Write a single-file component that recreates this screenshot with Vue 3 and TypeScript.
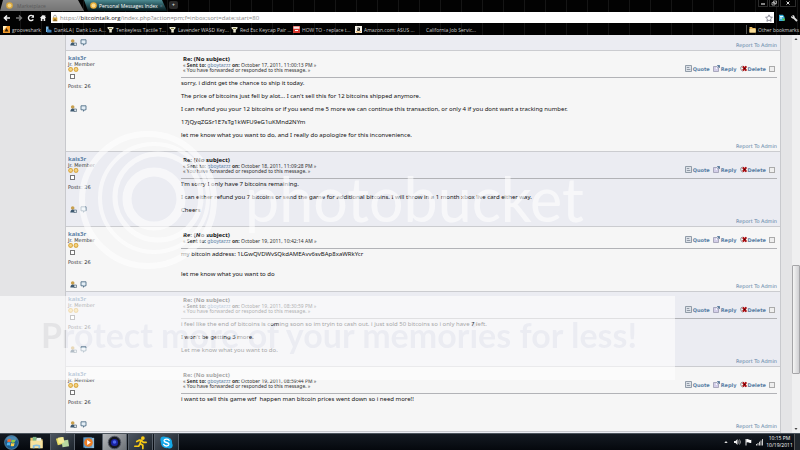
<script setup lang="ts">
interface Post {
  sent: string
  forwarded: boolean
  paragraphs: string[]
  spacious?: boolean
}

interface Bookmark {
  label: string
  icon: 'shark' | 'deal' | 'key' | 'howto' | 'amazon' | 'none'
}

const posts: Post[] = [
  {
    sent: 'October 17, 2011, 11:00:13 PM',
    forwarded: true,
    paragraphs: [
      'sorry, i didnt get the chance to ship it today.',
      "The price of bitcoins just fell by alot... I can't sell this for 12 bitcoins shipped anymore.",
      'I can refund you your 12 bitcoins or if you send me 5 more we can continue this transaction, or only 4 if you dont want a tracking number.',
      '17jQyqZGSr1E7sTg1kWFU9eG1uKMnd2NYm',
      'let me know what you want to do, and I really do apologize for this inconvenience.',
    ],
  },
  {
    sent: 'October 18, 2011, 11:09:28 PM',
    forwarded: true,
    paragraphs: [
      "I'm sorry I only have 7 bitcoins remaining.",
      'I can either refund you 7 bitcoins or send the game for additional bitcoins. I will throw in a 1 month xbox live card either way.',
      'Cheers',
    ],
  },
  {
    sent: 'October 19, 2011, 10:42:14 AM',
    forwarded: false,
    spacious: true,
    paragraphs: ['my bitcoin address: 1LGwQVDWvSQkdAMEAvv6svBAp8xaWRkYcr', 'let me know what you want to do'],
  },
  {
    sent: 'October 19, 2011, 08:30:59 PM',
    forwarded: true,
    paragraphs: [
      'i feel like the end of bitcoins is coming soon so im tryin to cash out. i just sold 50 bitcoins so i only have 7 left.',
      "I won't be getting 5 more.",
      'Let me know what you want to do.',
    ],
  },
  {
    sent: 'October 19, 2011, 08:59:44 PM',
    forwarded: true,
    paragraphs: ['i want to sell this game wtf\u00a0 happen man bitcoin prices went down so i need more!!'],
  },
]

const bookmarks: Bookmark[] = [
  { label: 'grooveshark', icon: 'shark' },
  { label: 'DankLA| Dank Los A...', icon: 'deal' },
  { label: 'Tenkeyless Tactile T...', icon: 'key' },
  { label: 'Lavender WASD Key...', icon: 'key' },
  { label: 'Red Esc Keycap Pair ...', icon: 'key' },
  { label: 'HOW TO - replace t...', icon: 'howto' },
  { label: 'Amazon.com: ASUS ...', icon: 'amazon' },
  { label: 'California Job Servic...', icon: 'none' },
]
</script>

<template>
  <div class="desktop">
    <header class="browser">
      <div class="tabs">
        <button class="tab idle" type="button">
          <svg class="coin" viewBox="0 0 7 7"><circle cx="3.500" cy="3.500" r="3.300" fill="#d9a83c" /><circle cx="3.500" cy="3.500" r="2" fill="#f1d388" /></svg>
          <span>Marketplace</span>
        </button>
        <button class="tab active" type="button">
          <svg class="coin" viewBox="0 0 7 7"><circle cx="3.500" cy="3.500" r="3.300" fill="#e8ad36" /><circle cx="3.500" cy="3.500" r="2" fill="#f8dc93" /></svg>
          <span>Personal Messages Index</span>
          <i>×</i>
        </button>
        <button class="new-tab" type="button" aria-label="New tab">+</button>
        <div class="window-buttons">
          <button type="button" aria-label="Minimize"><svg viewBox="0 0 8 6"><path d="M2 4h4" stroke="#ddd" stroke-width="1.200" /></svg></button>
          <button type="button" aria-label="Restore"><svg viewBox="0 0 8 6"><path d="M3.500 1h3v2.500h-3zM2 2.500h3V5H2z" fill="#111" stroke="#bbb" stroke-width=".8" /></svg></button>
          <button class="wide" type="button" aria-label="Close"><svg viewBox="0 0 8 6"><path d="M2.500 1.500l3 3m0-3l-3 3" stroke="#ddd" /></svg></button>
        </div>
      </div>

      <div class="toolbar">
        <button type="button" aria-label="Back"><svg viewBox="0 0 8 8"><path d="M7 4H2M4 1.500L1.500 4 4 6.500" fill="none" stroke="#f2f2f2" stroke-width="1.600" /></svg></button>
        <button type="button" aria-label="Forward"><svg viewBox="0 0 8 8"><path d="M1 4h5M4 1.500L6.500 4 4 6.500" fill="none" stroke="#777" stroke-width="1.400" /></svg></button>
        <button type="button" aria-label="Reload"><svg viewBox="0 0 8 8"><path d="M6.300 5.300A2.600 2.600 0 1 1 6 2.300" fill="none" stroke="#eee" stroke-width="1.400" /><path d="M7 .8v3H4z" fill="#eee" /></svg></button>
        <button type="button" aria-label="Home"><svg viewBox="0 0 8 8"><path d="M4 .8L.8 4h1v3h1.600V5h1.200v2h1.600V4h1L6.300 3V1.200h-1v.9z" fill="#eee" /></svg></button>
        <div class="address">
          <svg class="lock" viewBox="0 0 6 8"><path d="M1.700 4V2.500a1.300 1.300 0 0 1 2.600 0V4" fill="none" stroke="#999" stroke-width=".9" /><path d="M.7 3.500h4.600v3.500H.7z" fill="#dba63a" /><path d="M3 4.500l2.500 2.700H.7z" fill="#8c6b2a" /></svg>
          <a href="#">https://<b>bitcointalk.org</b>/index.php?action=pm;f=inbox;sort=date;start=80</a>
          <svg class="star" viewBox="0 0 8 8"><path d="M4 .8l1 2.200 2.400.3-1.800 1.600.5 2.400L4 6.100 1.900 7.300l.5-2.400L.6 3.300 3 3z" fill="#fff" stroke="#667" stroke-width=".7" /></svg>
        </div>
        <button type="button" aria-label="Downloads"><svg viewBox="0 0 8 8"><path d="M1 .8h4L6.500 3v4H1z" fill="#3bb1dc" /><path d="M2 2.500h3M2 4h2" stroke="#e6faff" /><path d="M4.500 4.500H7v2H4.500z" fill="#5fbf4b" /></svg></button>
        <button type="button" aria-label="Settings"><svg viewBox="0 0 8 8"><path d="M3 3l4 4" stroke="#ddd" stroke-width="1.800" /><path d="M1 1.800l1.200 1.100.8-.8L2 1a2 2 0 0 1 2.500 2.600A2 2 0 0 1 1 1.800z" fill="#ddd" /></svg></button>
      </div>

      <nav class="bookmarks">
        <a v-for="mark in bookmarks" :key="mark.label" href="#" :class="mark.icon">
          <svg viewBox="0 0 7 7">
            <template v-if="mark.icon === 'shark'"><path d="M0 0h7v7H0z" fill="#f29a2a" /><path d="M0 0h4L1 4H0z" fill="#fff0c0" /><path d="M1.500 5.500l2-3.500 2 3.500z" fill="#33200a" /></template>
            <template v-else-if="mark.icon === 'deal'"><path d="M1 .5h2.500V6H1z" fill="#7cb6df" /><path d="M2 3l4.500 1v2.500H2z" fill="#3f7fb5" /></template>
            <template v-else-if="mark.icon === 'key'"><path d="M.5 1h6v1.300L4.800 4v2.500H2.300V4L.5 2.300z" fill="#e9e6cf" /><path d="M2 2.500h3" stroke="#7d7a45" /></template>
            <template v-else-if="mark.icon === 'howto'"><path d="M0 0h7v7H0z" fill="#d93a30" /><path d="M.5.5h6v2.300h-6z" fill="#f4e9e6" /><path d="M2 4.500h3" stroke="#fff" /></template>
            <template v-else-if="mark.icon === 'amazon'"><path d="M0 0h7v7H0z" fill="#f5f2e8" /><path d="M2.300 2h2.200v2.500H2.500V3.300h2" fill="none" stroke="#111" stroke-width=".9" /><path d="M1 5.500q2.500 1.500 5 0" fill="none" stroke="#e99a27" stroke-width=".8" /></template>
          </svg>
          <span>{{ mark.label }}</span>
        </a>
        <a class="other" href="#">
          <svg viewBox="0 0 7 7"><path d="M.5 1h2.500l.7 1h3v4.500H.5z" fill="#e9bd63" /><path d="M.5 3h6.200v3.500H.5z" fill="#f8dc97" /></svg>
          <span>Other bookmarks</span>
        </a>
      </nav>
    </header>

    <main class="page">
      <div class="board">
        <article class="post tail shaded">
          <div class="contact">
            <svg viewBox="0 0 7 7"><circle cx="2.700" cy="2" r="1.800" fill="#c89f4d" /><path d="M.3 6.500q.2-3 2.600-3 2 0 2.200 3z" fill="#3c5870" /><path d="M4 4h2.500v2.500H4z" fill="#dde6ee" stroke="#445a6c" stroke-width=".6" /></svg>
            <svg viewBox="0 0 7 7"><path d="M1 .8h5v4H4.500L3.500 6.300V4.800H1z" fill="#e4eef6" stroke="#516f88" stroke-width=".9" /></svg>
          </div>
          <a class="report" href="#">Report To Admin</a>
        </article>

        <article v-for="(post, index) in posts" :key="post.sent" class="post" :class="{ shaded: index % 2 === 1 }">
          <aside class="poster">
            <a class="name" href="#">kais3r</a>
            <span class="rank">Jr. Member</span>
            <svg class="coins" viewBox="0 0 11 5"><circle cx="2.600" cy="2.500" r="2.400" fill="#d9a63e" /><circle cx="2.600" cy="2.400" r="1.400" fill="#f5d584" /><circle cx="8" cy="2.500" r="2.400" fill="#d9a63e" /><circle cx="8" cy="2.400" r="1.400" fill="#f5d584" /></svg>
            <span class="offline"></span>
            <span class="count">Posts: 26</span>
            <div class="contact">
              <svg viewBox="0 0 7 7"><circle cx="2.700" cy="2" r="1.800" fill="#c89f4d" /><path d="M.3 6.500q.2-3 2.600-3 2 0 2.200 3z" fill="#3c5870" /><path d="M4 4h2.500v2.500H4z" fill="#dde6ee" stroke="#445a6c" stroke-width=".6" /></svg>
              <svg viewBox="0 0 7 7"><path d="M1 .8h5v4H4.500L3.500 6.300V4.800H1z" fill="#e4eef6" stroke="#516f88" stroke-width=".9" /></svg>
            </div>
          </aside>

          <section class="message">
            <div class="head">
              <div class="titles">
                <h2>Re: (No subject)</h2>
                <p>« <b>Sent to:</b> <a href="#">gboytazzz</a> <b>on:</b> {{ post.sent }} »</p>
                <p v-if="post.forwarded">« You have forwarded or responded to this message. »</p>
              </div>
              <div class="actions">
                <a href="#"><svg viewBox="0 0 7 7"><path d="M.5.5h6v6h-6z" fill="#dde2e9" stroke="#8894a0" stroke-width=".9" /><path d="M1.800 2.500h2.500M1.800 4.500h3.500" stroke="#7d8894" stroke-width=".8" /></svg>Quote</a>
                <a href="#"><svg viewBox="0 0 7 7"><path d="M.5 1.500h5v5h-5z" fill="#d3cee8" stroke="#9a9ab0" stroke-width=".8" /><path d="M3 4l1.500-2.500" stroke="#fff" /><path d="M4.200.5h2.300v2.400M6.300.7L4.500 2.500" fill="none" stroke="#53779a" stroke-width=".9" /></svg>Reply</a>
                <a href="#"><svg viewBox="0 0 7 7"><path d="M2.500 1Q.5 1.500.7 3.500t2 2.800" fill="none" stroke="#777" stroke-width=".8" /><path d="M2.800 1.300l3.500 4.400m0-4.400l-3.500 4.400" stroke="#a80e12" stroke-width="1.900" /><path d="M3.800 3.500h1.500" stroke="#400" /></svg>Delete</a>
                <input type="checkbox" :aria-label="'Select message ' + (index + 1)" />
              </div>
            </div>
            <div class="body" :class="{ spacious: post.spacious }">
              <p v-for="text in post.paragraphs" :key="text">{{ text }}</p>
            </div>
            <a class="report" href="#">Report To Admin</a>
          </section>
        </article>
        <div class="post shaded"></div>
      </div>
      <div class="scrollbar">
        <svg viewBox="0 0 8 8"><path d="M2.500 5L4 3l1.500 2z" fill="#444" /></svg>
        <div class="track"><div class="thumb"></div></div>
        <svg viewBox="0 0 8 8"><path d="M2.500 3L4 5l1.500-2z" fill="#444" /></svg>
      </div>
    </main>

    <footer class="taskbar">
      <button class="start" type="button" aria-label="Start">
        <svg viewBox="0 0 16 16"><circle cx="8" cy="8" r="7.400" fill="#1d5c8d" stroke="#7caac6" stroke-width=".6" /><ellipse cx="8" cy="4.500" rx="5.500" ry="3.300" fill="#6ea6ca" opacity=".6" /><path d="M4 4.700q2-1 3.600 0L7 7.600q-1.500-1-3.500 0z" fill="#f0642f" /><path d="M8.300 5q1.700.9 3.700-.2l-.6 3q-2 1-3.600 0z" fill="#8fcc3d" /><path d="M3.400 8.300q2-1 3.500 0l-.6 3q-1.600-1-3.500 0z" fill="#4fb4ef" /><path d="M7.700 8.600q1.600 1 3.600 0l-.7 3q-1.900 1-3.500 0z" fill="#fbd04a" /></svg>
      </button>
      <button type="button" aria-label="Explorer">
        <svg viewBox="0 0 16 16"><path d="M1.500 3h4l1 1.500h8V14h-13z" fill="#e5c36d" /><path d="M4 2h4v5H4z" fill="#7fb787" /><path d="M8 3h5v4H8z" fill="#eaf2e9" /><path d="M1.500 6h13v8h-13z" fill="#f6e2a0" /><path d="M4 14v-3q4-2 8 0v3h-2v-2H6v2z" fill="#87bfe2" /></svg>
      </button>
      <button class="open" type="button" aria-label="Sticky Notes">
        <svg viewBox="0 0 16 16"><path d="M1 4l7-2 2 7-7 2z" fill="#e8dc62" /><path d="M7 6l7-1 1 7-7 1z" fill="#b8d9a0" /><path d="M3 3l6-1 1 6-6 1z" fill="#f3ec9a" /></svg>
      </button>
      <button type="button" aria-label="Media Player">
        <svg viewBox="0 0 16 16"><path d="M4 3h10v11H4z" fill="#8bb8d8" /><path d="M2.500 2.500h9v11h-9z" fill="#5f98c4" /><circle cx="8" cy="8" r="4.600" fill="#ed7d24" /><path d="M6.500 5.300v5.400l4-2.700z" fill="#fff" /></svg>
      </button>
      <button class="open lit" type="button" aria-label="Camera">
        <svg viewBox="0 0 16 16"><circle cx="8" cy="8" r="6.700" fill="#14161e" stroke="#555b68" /><circle cx="8" cy="8" r="3.800" fill="#1b24a0" /><circle cx="8" cy="7.500" r="1.900" fill="#4d67ef" /></svg>
      </button>
      <button class="open" type="button" aria-label="Messenger">
        <svg viewBox="0 0 16 16"><circle cx="10.500" cy="3.300" r="2" fill="#f9cb15" /><path d="M8.700 5.500L7.500 9l3 2v3.500M7.500 9.500L6 12H2M4 7l2.500-1.500 2.500.3 2 2h3" fill="none" stroke="#f9cb15" stroke-width="1.800" stroke-linecap="round" stroke-linejoin="round" /></svg>
      </button>
      <button class="open" type="button" aria-label="Skype">
        <svg viewBox="0 0 16 16"><circle cx="8" cy="8" r="6" fill="#15a8e8" /><circle cx="5" cy="5" r="3.500" fill="#15a8e8" /><circle cx="11" cy="11" r="3.500" fill="#15a8e8" /><path d="M10.800 5.700Q9.700 4.300 7.800 4.400 5.300 4.700 5.500 6.300 5.700 7.600 8 8q2.600.5 2.500 2-.2 1.600-2.500 1.700-2 0-3-1.700" fill="none" stroke="#fff" stroke-width="1.500" stroke-linecap="round" /></svg>
      </button>
      <div class="tray">
        <svg viewBox="0 0 8 8"><path d="M2.300 5L4 3l1.700 2z" fill="#ddd" /></svg>
        <svg viewBox="0 0 8 8"><path d="M1 3h1.500l2-2v6l-2-2H1z" fill="#eee" /><path d="M5.500 2.500q1 1.500 0 3M6.500 1.500q2 2.500 0 5" fill="none" stroke="#ccc" stroke-width=".7" /></svg>
        <svg viewBox="0 0 8 8"><path d="M2 1v6.500" stroke="#fff" stroke-width=".9" /><path d="M2.300 1.300q1.500-.6 2.500.2t2.500.3v3q-1.500.5-2.500-.2t-2.500 0z" fill="#fff" /></svg>
        <svg viewBox="0 0 8 8"><path d="M1 6h1v1.500H1zM2.500 5h1v2.500h-1zM4 3.800h1v3.700H4zM5.500 2.500h1v5h-1zM7 1h1v6.500H7z" fill="#ccc" /></svg>
        <time><span>10:15 PM</span><span>10/19/2011</span></time>
      </div>
      <button class="show-desktop" type="button" aria-label="Show desktop"></button>
    </footer>

    <svg class="watermark" viewBox="0 0 800 450" preserveAspectRatio="none">
      <defs>
        <mask id="slogan">
          <rect y="296" width="675" height="84" fill="#fff" />
          <text x="41" y="348" class="slogan">Protect more of your memories for less!</text>
        </mask>
      </defs>
      <g fill="none" stroke="#fff" opacity=".6">
        <circle cx="148" cy="200" r="66" stroke-width="6" />
        <circle cx="154" cy="198" r="54" stroke-width="4" />
        <circle cx="158" cy="197" r="43" stroke-width="5" />
        <circle cx="154" cy="199" r="27" stroke-width="9" />
      </g>
      <text x="245" y="222" class="brand">photobucket</text>
      <rect y="296" width="675" height="84" fill="#fff" opacity=".6" mask="url(#slogan)" />
    </svg>
  </div>
</template>

<style>
html,
body {
  margin: 0;
  overflow: hidden;
}
</style>

<style scoped>
.desktop {
  position: relative;
  display: flex;
  flex-direction: column;
  height: 100vh;
  overflow: hidden;
  font-family: "DejaVu Sans", sans-serif;
  font-size: 5px;
  line-height: 6px;
  color: #333;
}

button {
  display: flex;
  align-items: center;
  justify-content: center;
  margin: 0;
  padding: 0;
  border: 0;
  background: none;
  font: inherit;
  color: inherit;
}

a {
  color: #5a7fa5;
  text-decoration: none;
}

h2,
p {
  margin: 0;
}

svg {
  display: block;
  flex: none;
}

.browser {
  flex: none;
  background: repeating-linear-gradient(90deg, transparent 0 20px, #151515 20px 21px), #020202;
  font-family: "Open Sans", sans-serif;
  color: #ddd;
}

.tabs {
  display: flex;
  height: 11px;
}

.tab {
  gap: 4px;
  justify-content: flex-start;
  padding: 0 6px;
  line-height: 10px;
  white-space: nowrap;
}

.tab.idle {
  width: 84px;
  background: linear-gradient(#8a8a8a, #747474);
  color: #5c5c5c;
  clip-path: polygon(3px 0, 78px 0, 100% 100%, 0 100%);
}

.tab.active {
  width: 83px;
  gap: 2px;
  background: linear-gradient(#4d8b92, #255158 50%, #06181b);
  color: #fff;
  clip-path: polygon(0 0, 78px 0, 100% 100%, 4px 100%);
}

.tab i {
  margin-left: auto;
  font-style: normal;
  color: #789;
}

.coin {
  width: 7px;
  height: 7px;
}

.new-tab {
  width: 9px;
  height: 8px;
  margin: 1px 2px;
  border-radius: 2px;
  background: #2a2a2a;
  font-weight: bold;
  line-height: 8px;
}

.window-buttons {
  display: flex;
  gap: 1px;
  height: 7px;
  margin-left: auto;
  padding-right: 4px;
}

.window-buttons button {
  width: 10px;
  border: 1px solid #2c2c2c;
  border-top: 0;
}

.window-buttons .wide {
  width: 16px;
}

.window-buttons svg {
  width: 8px;
  height: 6px;
}

.toolbar {
  display: flex;
  align-items: center;
  gap: 4px;
  height: 13px;
  padding: 0 2px 0 3px;
}

.toolbar svg {
  width: 8px;
  height: 8px;
}

.address {
  display: flex;
  flex: 1;
  align-items: center;
  gap: 2px;
  height: 11px;
  padding: 0 1px;
  background: #fff;
  font-size: 6px;
  line-height: 8px;
}

.address a {
  flex: 1;
  color: #888;
}

.address b {
  font-weight: normal;
  color: #111;
}

.address .lock {
  width: 6px;
}

.bookmarks {
  display: flex;
  height: 11px;
  padding: 0 3px;
}

.bookmarks a {
  display: flex;
  align-items: center;
  gap: 2px;
  width: 62px;
  color: #ccc;
  white-space: nowrap;
}

.bookmarks .shark {
  width: 42px;
}

.bookmarks svg {
  width: 7px;
  height: 7px;
}

.bookmarks .other {
  width: 48px;
  margin: 1px 0 1px auto;
  padding-left: 2px;
  border-left: 1px solid #555;
}

.page {
  display: flex;
  flex: 1;
  min-height: 0;
  overflow: hidden;
  background: #e4e4e6;
}

.board {
  flex: 1;
  height: max-content;
  margin: 0 11px 0 65px;
  border: solid #c8c9cd;
  border-width: 0 1px;
}

.post {
  display: flex;
  padding: 1px 3px 1px 2px;
  border-bottom: 1px solid #cbccd0;
  background: #f6f6f6;
}

.post.shaded {
  background: #ebecf2;
}

.post.tail {
  justify-content: space-between;
  align-items: center;
  height: 13px;
}

.tail .report {
  padding-top: 2px;
}

.poster {
  display: flex;
  flex: none;
  flex-direction: column;
  align-items: flex-start;
  width: 113px;
  padding: 3px 0 2px;
}

.name {
  font-family: "Noto Sans", sans-serif;
  font-size: 6px;
  font-weight: bold;
}

.coins {
  width: 11px;
  height: 5px;
}

.offline {
  width: 3px;
  height: 3px;
  margin: 2px;
  border: 1px solid #777;
  background: #fff;
}

.count {
  margin-top: 2px;
}

.contact {
  display: flex;
  gap: 3px;
  padding-left: 2px;
}

.poster .contact {
  margin-top: 16px;
}

.contact svg {
  width: 7px;
  height: 7px;
}

.message {
  display: flex;
  flex: 1;
  flex-direction: column;
  min-width: 0;
}

.head {
  display: flex;
  align-items: flex-end;
  justify-content: space-between;
  padding: 3px 0 4px;
  border-bottom: 1px solid #b2b3b7;
}

.titles {
  padding-left: 2px;
  font-family: "Noto Sans", sans-serif;
  line-height: 5px;
}

h2 {
  font-size: 6px;
  line-height: 8px;
  color: #111;
}

.actions {
  display: flex;
  align-items: center;
  gap: 3px;
  padding-bottom: 1px;
}

.actions a {
  display: flex;
  align-items: center;
  gap: 1px;
  font-weight: bold;
}

.actions svg {
  width: 7px;
  height: 7px;
}

.actions input {
  appearance: none;
  box-sizing: border-box;
  width: 6px;
  height: 6px;
  margin: 0 2px 0 0;
  border: 1px solid #aaa;
  background: #eee;
}

.body {
  display: flex;
  flex-direction: column;
  gap: 6px;
  padding: 2px 0 4px;
  font-family: "Noto Sans", sans-serif;
  font-size: 6px;
  line-height: 7px;
  color: #111;
}

.body.spacious {
  gap: 13px;
}

.report {
  margin-top: auto;
  padding-bottom: 1px;
  text-align: right;
}

.scrollbar {
  display: flex;
  flex-direction: column;
  width: 8px;
  background: #efeff0;
}

.scrollbar svg {
  width: 8px;
  height: 8px;
}

.track {
  display: flex;
  flex: 1;
  flex-direction: column;
}

.thumb {
  height: 28%;
  margin-top: auto;
  margin-bottom: 51px;
  border: 1px solid #a5a5a8;
  border-radius: 1px;
  background: linear-gradient(90deg, #f5f5f5, #cfcfd2);
}

.taskbar {
  display: flex;
  flex: none;
  height: 16px;
  gap: 1px;
  border-top: 1px solid #4c545c;
  background: linear-gradient(#141a22, #05080d);
  font-family: "Open Sans", sans-serif;
  color: #fff;
}

.taskbar > button {
  width: 25px;
}

.taskbar > button svg {
  width: 15px;
  height: 15px;
}

.taskbar > .open {
  border: solid #59616b;
  border-width: 0 1px;
  background: linear-gradient(135deg, #4c5560, #1c232b);
}

.taskbar > .lit {
  background: linear-gradient(135deg, #b5b8bc, #6c7177);
}

.taskbar > .start {
  width: 23px;
}

.tray {
  display: flex;
  align-items: center;
  gap: 3px;
  margin-left: auto;
}

.tray svg {
  width: 8px;
  height: 8px;
}

.tray time {
  display: flex;
  flex-direction: column;
  align-items: center;
  width: 27px;
  line-height: 7px;
}

.taskbar > .show-desktop {
  width: 6px;
  border-left: 1px solid #555;
  background: #20262c;
}

.watermark {
  position: absolute;
  inset: 0;
  width: 100%;
  height: 100%;
  pointer-events: none;
}

.slogan {
  font: 700 34px Lato, sans-serif;
  fill: #000;
}

.brand {
  font: 400 61px Lato, sans-serif;
  fill: #fff;
  opacity: 0.6;
}
</style>
